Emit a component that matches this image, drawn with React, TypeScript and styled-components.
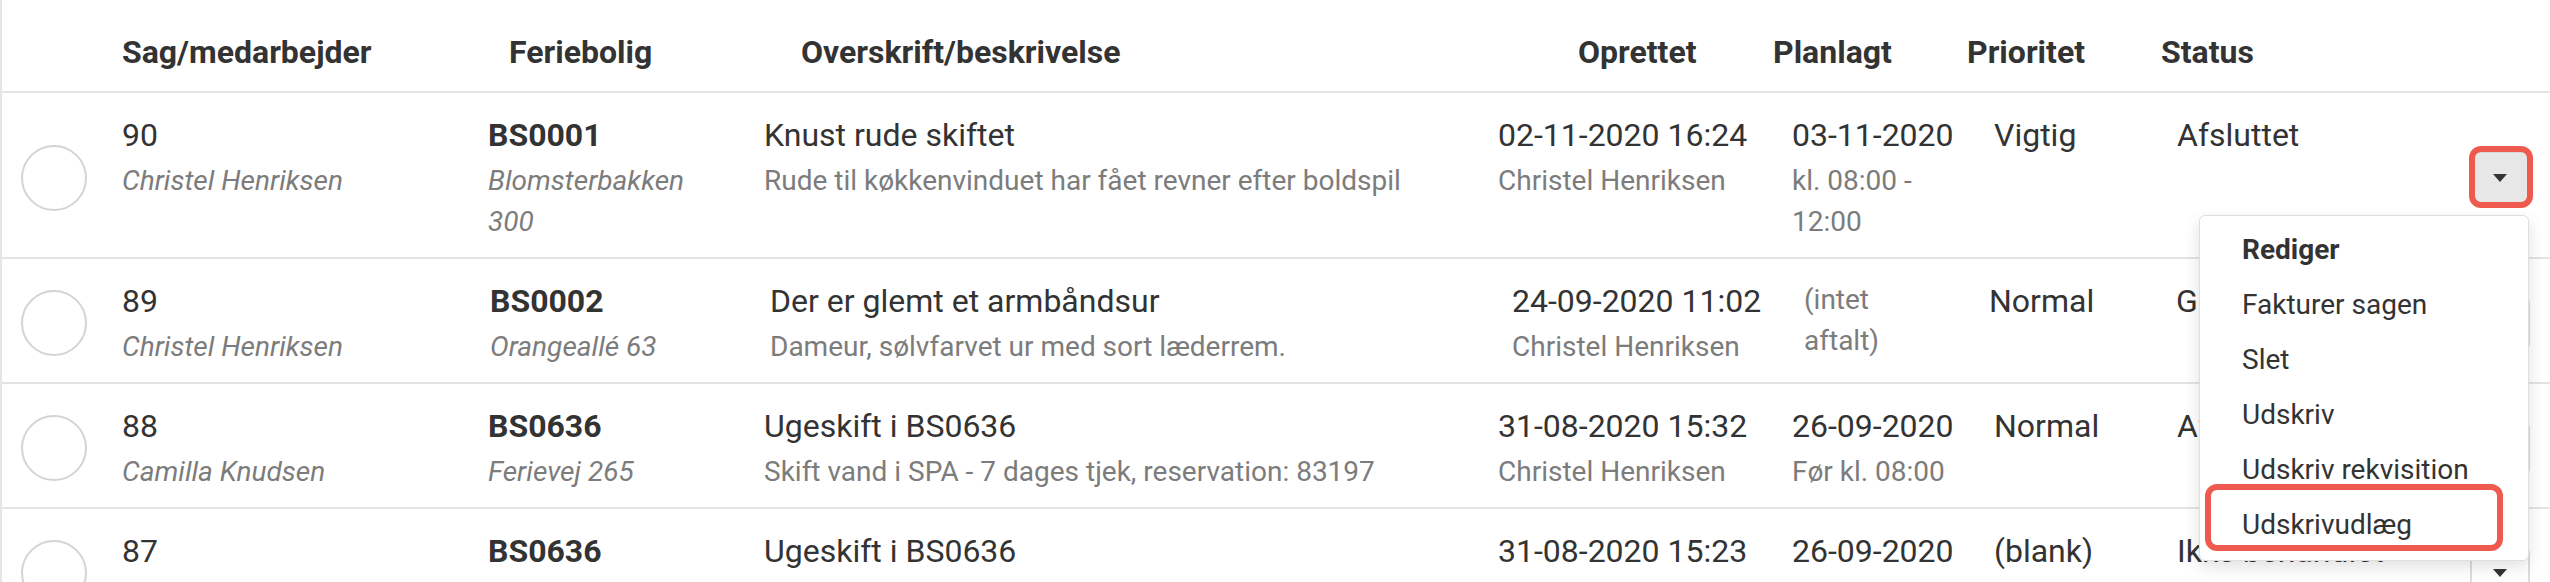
import React from "react";
import styled, { createGlobalStyle } from "styled-components";

const GlobalStyle = createGlobalStyle`
  html, body {
    margin: 0;
    padding: 0;
    background: #ffffff;
    overflow: hidden;
  }
  body {
    font-family: Roboto, "Liberation Sans", Arial, sans-serif;
    color: #333333;
  }
`;

const STANDARD_COLS = "120px 366px 276px 734px 294px 202px 183px 1fr 60px";
const SHIFTED_COLS = "120px 368px 280px 742px 292px 185px 187px 1fr 60px";
const HEAD_COLS = "120px 387px 292px 777px 195px 194px 194px 1fr 60px";

const Table = styled.div`
  border-left: 2px solid #e6e6e6;
`;

const Row = styled.div<{ $cols: string }>`
  display: grid;
  grid-template-columns: ${(p) => p.$cols};
  align-items: start;
  padding: 20px 20px 15px 0;
  border-bottom: 2px solid #e3e3e3;
`;

const HeadRow = styled(Row)`
  padding: 30px 20px 17px 0;
`;

const HeadCell = styled.div`
  font-size: 32px;
  line-height: 44px;
  font-weight: 700;
  color: #333333;
  white-space: nowrap;
`;

const Cell = styled.div`
  min-width: 0;
  padding-right: 30px;
`;

const Primary = styled.div<{ $bold?: boolean }>`
  font-size: 32px;
  line-height: 44px;
  font-weight: ${(p) => (p.$bold ? 700 : 400)};
  color: #333333;
  white-space: nowrap;
  margin-bottom: 3px;
`;

const Secondary = styled.div<{ $italic?: boolean; $max?: number }>`
  font-size: 28px;
  line-height: 41px;
  color: #7c7c7c;
  font-style: ${(p) => (p.$italic ? "italic" : "normal")};
  max-width: ${(p) => (p.$max ? `${p.$max}px` : "none")};
`;

const Check = styled.div`
  align-self: center;
  margin-left: 19px;
  width: 66px;
  height: 66px;
  box-sizing: border-box;
  border: 2px solid #d4d4d4;
  border-radius: 50%;
`;

const ActionCell = styled.div`
  align-self: center;
  position: relative;
`;

const ActionButton = styled.div<{ $active?: boolean; $marked?: boolean }>`
  position: relative;
  width: 60px;
  height: 53px;
  box-sizing: border-box;
  display: flex;
  align-items: center;
  justify-content: center;
  border-radius: 6px;
  border: 2px solid ${(p) => (p.$active ? "#d9d9d9" : "#dddddd")};
  background: ${(p) => (p.$active ? "#e7e7e7" : "#ffffff")};

  &::after {
    content: "";
    display: ${(p) => (p.$marked ? "block" : "none")};
    position: absolute;
    top: -7px;
    left: -3px;
    right: -5px;
    bottom: -6px;
    border: 6px solid #ee5b4e;
    border-radius: 12px;
  }
`;

const Menu = styled.div`
  position: absolute;
  top: calc(100% + 11px);
  right: 1px;
  z-index: 10;
  width: 330px;
  box-sizing: border-box;
  padding: 6px 0 8px;
  background: #ffffff;
  border: 1px solid #dedede;
  border-radius: 6px;
  box-shadow: 0 6px 16px rgba(0, 0, 0, 0.12);
`;

const MenuItem = styled.div<{ $bold?: boolean; $marked?: boolean }>`
  position: relative;
  padding-left: 42px;
  font-size: 28px;
  line-height: 55px;
  font-weight: ${(p) => (p.$bold ? 700 : 400)};
  color: #333333;
  white-space: nowrap;

  &::after {
    content: "";
    display: ${(p) => (p.$marked ? "block" : "none")};
    position: absolute;
    top: -13px;
    left: 5px;
    right: 25px;
    bottom: 1px;
    border: 6px solid #ee5b4e;
    border-radius: 12px;
  }
`;

function Caret() {
  return (
    <svg width="14" height="8" viewBox="0 0 14 8">
      <polygon points="0,0 14,0 7,8" fill="#333333" />
    </svg>
  );
}

type Task = {
  id: string;
  worker: string;
  house: string;
  address: string;
  title: string;
  desc: string;
  created: string;
  createdBy: string;
  planned?: string;
  plannedNote: string;
  noteMax?: number;
  priority: string;
  status: string;
  cols: string;
  open?: boolean;
};

const tasks: Task[] = [
  {
    id: "90",
    worker: "Christel Henriksen",
    house: "BS0001",
    address: "Blomsterbakken 300",
    title: "Knust rude skiftet",
    desc: "Rude til køkkenvinduet har fået revner efter boldspil",
    created: "02-11-2020 16:24",
    createdBy: "Christel Henriksen",
    planned: "03-11-2020",
    plannedNote: "kl. 08:00 - 12:00",
    priority: "Vigtig",
    status: "Afsluttet",
    cols: STANDARD_COLS,
    open: true,
  },
  {
    id: "89",
    worker: "Christel Henriksen",
    house: "BS0002",
    address: "Orangeallé 63",
    title: "Der er glemt et armbåndsur",
    desc: "Dameur, sølvfarvet ur med sort læderrem.",
    created: "24-09-2020 11:02",
    createdBy: "Christel Henriksen",
    plannedNote: "(intet aftalt)",
    noteMax: 120,
    priority: "Normal",
    status: "Godkendt",
    cols: SHIFTED_COLS,
  },
  {
    id: "88",
    worker: "Camilla Knudsen",
    house: "BS0636",
    address: "Ferievej 265",
    title: "Ugeskift i BS0636",
    desc: "Skift vand i SPA - 7 dages tjek, reservation: 83197",
    created: "31-08-2020 15:32",
    createdBy: "Christel Henriksen",
    planned: "26-09-2020",
    plannedNote: "Før kl. 08:00",
    priority: "Normal",
    status: "Afsluttet",
    cols: STANDARD_COLS,
  },
  {
    id: "87",
    worker: "Camilla Knudsen",
    house: "BS0636",
    address: "Ferievej 265",
    title: "Ugeskift i BS0636",
    desc: "Skift vand i SPA - 7 dages tjek, reservation: 83196",
    created: "31-08-2020 15:23",
    createdBy: "Christel Henriksen",
    planned: "26-09-2020",
    plannedNote: "Før kl. 08:00",
    priority: "(blank)",
    status: "Ikke behandlet",
    cols: STANDARD_COLS,
  },
];

const menuItems = [
  "Rediger",
  "Fakturer sagen",
  "Slet",
  "Udskriv",
  "Udskriv rekvisition",
  "Udskrivudlæg",
];

function TaskRow({ task }: { task: Task }) {
  return (
    <Row $cols={task.cols}>
      <Check />
      <Cell>
        <Primary>{task.id}</Primary>
        <Secondary $italic>{task.worker}</Secondary>
      </Cell>
      <Cell>
        <Primary $bold>{task.house}</Primary>
        <Secondary $italic>{task.address}</Secondary>
      </Cell>
      <Cell>
        <Primary>{task.title}</Primary>
        <Secondary>{task.desc}</Secondary>
      </Cell>
      <Cell>
        <Primary>{task.created}</Primary>
        <Secondary>{task.createdBy}</Secondary>
      </Cell>
      <Cell>
        {task.planned && <Primary>{task.planned}</Primary>}
        <Secondary $max={task.noteMax}>{task.plannedNote}</Secondary>
      </Cell>
      <Cell>
        <Primary>{task.priority}</Primary>
      </Cell>
      <Cell>
        <Primary>{task.status}</Primary>
      </Cell>
      <ActionCell>
        <ActionButton $active={task.open} $marked={task.open}>
          <Caret />
        </ActionButton>
        {task.open && (
          <Menu>
            {menuItems.map((item, i) => (
              <MenuItem
                key={item}
                $bold={i === 0}
                $marked={i === menuItems.length - 1}
              >
                {item}
              </MenuItem>
            ))}
          </Menu>
        )}
      </ActionCell>
    </Row>
  );
}

export default function App() {
  return (
    <>
      <GlobalStyle />
      <Table>
        <HeadRow $cols={HEAD_COLS}>
          <div />
          <HeadCell>Sag/medarbejder</HeadCell>
          <HeadCell>Feriebolig</HeadCell>
          <HeadCell>Overskrift/beskrivelse</HeadCell>
          <HeadCell>Oprettet</HeadCell>
          <HeadCell>Planlagt</HeadCell>
          <HeadCell>Prioritet</HeadCell>
          <HeadCell>Status</HeadCell>
          <div />
        </HeadRow>
        {tasks.map((t) => (
          <TaskRow key={t.id} task={t} />
        ))}
      </Table>
    </>
  );
}
